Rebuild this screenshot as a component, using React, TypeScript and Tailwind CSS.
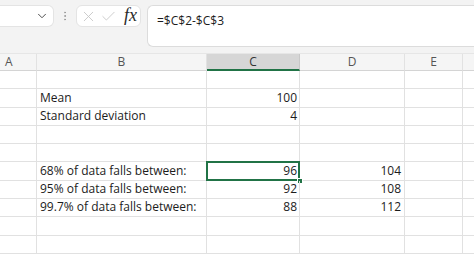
import React from 'react'
import { ChevronDown, X, Check, EllipsisVertical } from 'lucide-react'

const COLS = [
     { key: 'A', w: 'w-[37px]', label: 'justify-start pl-[5px]', text: 'A' },
     { key: 'B', w: 'w-[170px]', label: 'justify-center', text: 'B' },
     { key: 'C', w: 'w-[93px]', label: 'justify-center', text: 'C' },
     { key: 'D', w: 'w-[105px]', label: 'justify-center', text: 'D' },
     { key: 'E', w: 'w-[58px]', label: 'justify-center', text: 'E' },
     { key: 'F', w: 'w-[40px]', label: 'justify-center', text: '' },
]

const ROWS: { b?: string; c?: string; d?: string; sel?: boolean }[] = [
     {},
     { b: 'Mean', c: '100' },
     { b: 'Standard deviation', c: '4' },
     {},
     {},
     { b: '68% of data falls between:', c: '96', d: '104', sel: true },
     { b: '95% of data falls between:', c: '92', d: '108' },
     { b: '99.7% of data falls between:', c: '88', d: '112' },
     {},
     {},
]

export default function App() {
     return (
          <div className="w-[474px] h-[254px] overflow-hidden bg-white text-[#1c1c1c]" style={{ fontFamily: '"Open Sans", sans-serif' }}>
               {/* Formula bar */}
               <div className="h-[53px] bg-[#f3f3f3] flex items-start pt-[5px]">
                    <div className="w-[54px] h-[22px] bg-white rounded-r-md border border-l-0 border-[#e4e4e4] flex items-center justify-end pr-[4px] text-[#444]">
                         <ChevronDown className="w-[14px] h-[14px]" strokeWidth={1.6} />
                    </div>
                    <div className="w-[22px] h-[22px] flex items-center justify-center text-[#9a9a9a]">
                         <EllipsisVertical className="w-[12px] h-[12px]" strokeWidth={2} />
                    </div>
                    <div className="w-[65px] h-[22px] bg-white rounded-md border border-[#e4e4e4] flex items-center pl-[3px]">
                         <X className="w-[17px] h-[17px] text-[#c4c4c4]" strokeWidth={1.2} />
                         <Check className="w-[17px] h-[17px] ml-[3px] text-[#c4c4c4]" strokeWidth={1.2} />
                         <span className="ml-[7px] text-[18px] italic text-[#2a2a2a] leading-none -mt-[2px]" style={{ fontFamily: '"Liberation Serif", serif' }}>fx</span>
                    </div>
                    <div className="ml-[6px] flex-1 h-[42px] bg-white rounded-l-md border border-r-0 border-[#dcdcdc] pl-[9px] pt-[7px] text-[12px] leading-[16px]">
                         =$C$2-$C$3
                    </div>
               </div>

               {/* Column headers */}
               <div className="flex h-[18px] bg-[#f5f5f5] border-t border-[#e6e6e6]">
                    {COLS.map(col => (
                         <div
                              key={col.key}
                              className={`${col.w} shrink-0 flex items-center text-[12px] border-r ${col.key === 'C' ? 'bg-[#d6d6d6] border-b-2 border-b-[#217346] border-r-[#c8c8c8] text-[#333]' : 'border-b border-b-[#d4d4d4] border-r-[#e2e2e2] text-[#555]'} ${col.label}`}
                         >
                              {col.text}
                         </div>
                    ))}
               </div>

               {/* Grid */}
               {ROWS.map((row, i) => (
                    <div key={i} className="flex h-[18.3px] text-[12px] leading-none">
                         <div className="w-[37px] shrink-0 border-r border-b border-[#e1e1e1]" />
                         <div className="w-[170px] shrink-0 border-r border-b border-[#e1e1e1] flex items-end pl-[3px] pb-[3px] whitespace-nowrap">
                              {row.b}
                         </div>
                         <div className="relative w-[93px] shrink-0 border-r border-b border-[#e1e1e1] flex items-end justify-end pr-[2px] pb-[3px]">
                              {row.c}
                              {row.sel && (
                                   <>
                                        <div className="absolute -left-px -top-px w-[94px] h-[20px] border-2 border-[#217346]" />
                                        <div className="absolute right-[-4px] bottom-[-4px] w-[6px] h-[6px] bg-[#217346] border border-white" />
                                   </>
                              )}
                         </div>
                         <div className="w-[105px] shrink-0 border-r border-b border-[#e1e1e1] flex items-end justify-end pr-[3px] pb-[3px]">
                              {row.d}
                         </div>
                         <div className="w-[58px] shrink-0 border-r border-b border-[#e1e1e1]" />
                         <div className="w-[40px] shrink-0 border-b border-[#e1e1e1]" />
                    </div>
               ))}
          </div>
     )
}
